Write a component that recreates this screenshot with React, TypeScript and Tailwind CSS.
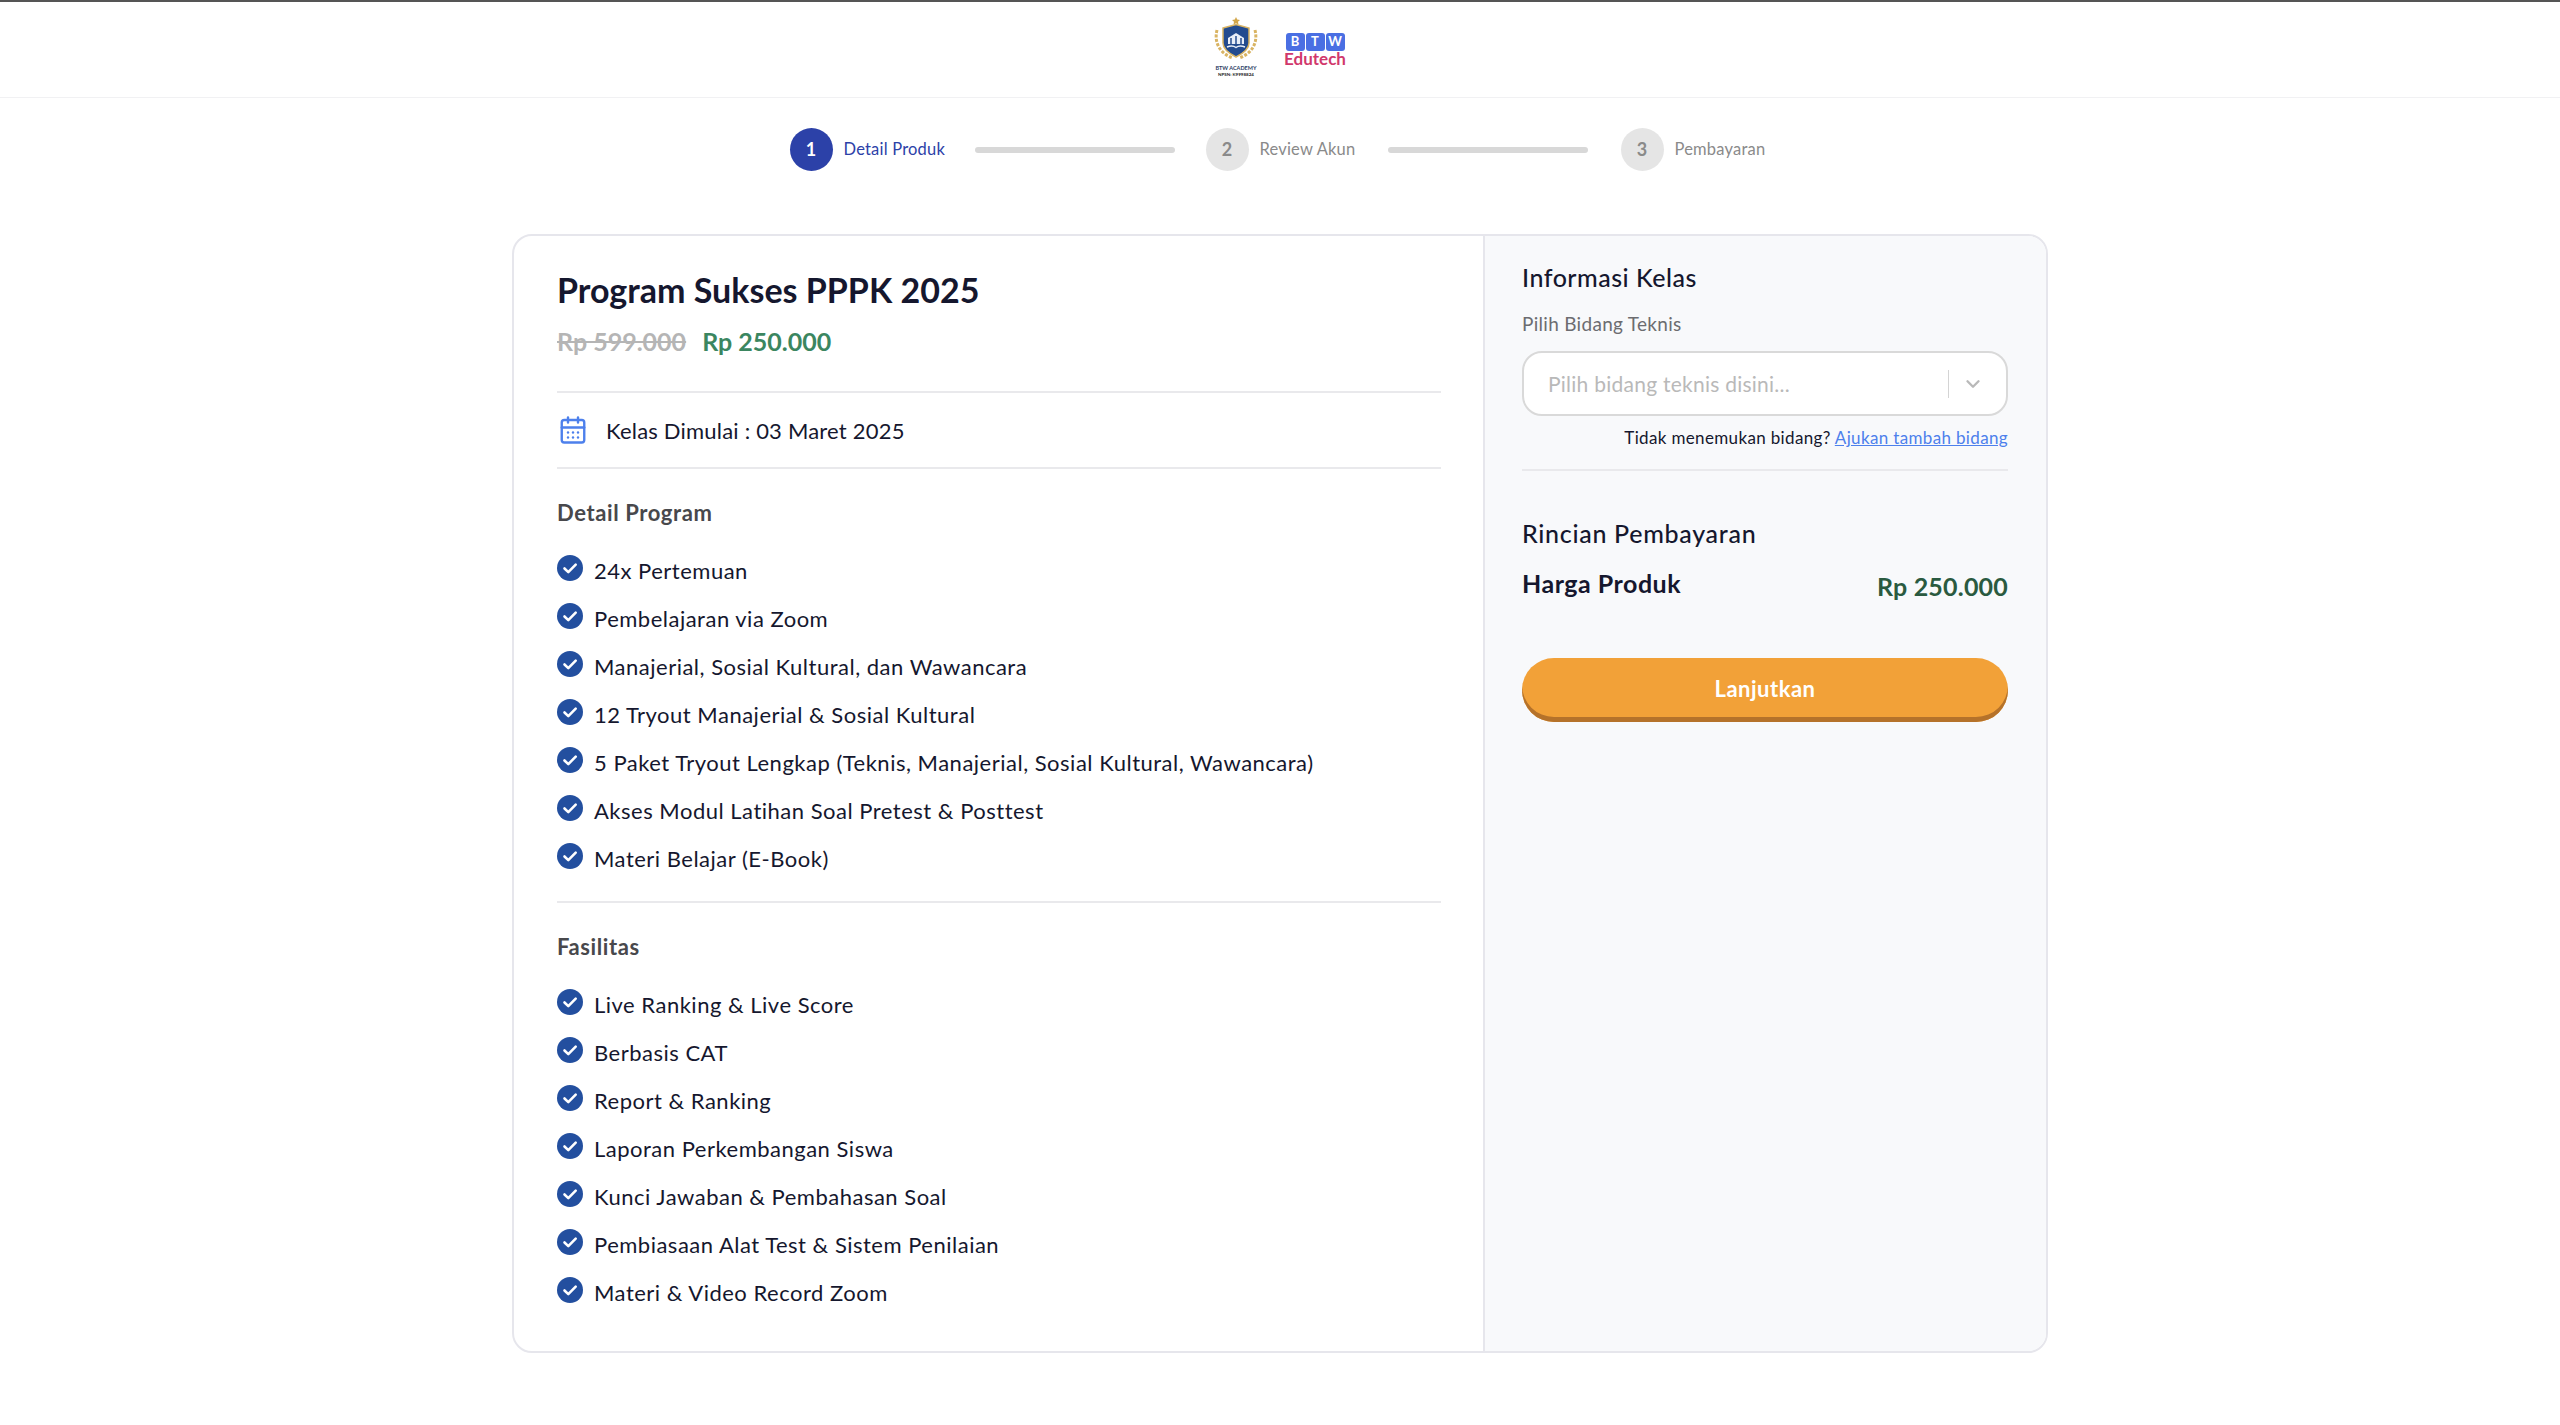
import { CalendarDays, ChevronDown } from "lucide-react";

const detailProgram = [
  "24x Pertemuan",
  "Pembelajaran via Zoom",
  "Manajerial, Sosial Kultural, dan Wawancara",
  "12 Tryout Manajerial & Sosial Kultural",
  "5 Paket Tryout Lengkap (Teknis, Manajerial, Sosial Kultural, Wawancara)",
  "Akses Modul Latihan Soal Pretest & Posttest",
  "Materi Belajar (E-Book)",
];

const fasilitas = [
  "Live Ranking & Live Score",
  "Berbasis CAT",
  "Report & Ranking",
  "Laporan Perkembangan Siswa",
  "Kunci Jawaban & Pembahasan Soal",
  "Pembiasaan Alat Test & Sistem Penilaian",
  "Materi & Video Record Zoom",
];

const CheckBadge = () => (
  <svg viewBox="0 0 26 26" className="h-[26px] w-[26px] shrink-0 -translate-y-[3px]">
    <circle cx="13" cy="13" r="13" fill="#234f9f" />
    <path d="M7.5 13.5l3.8 3.6 7.4-7.4" fill="none" stroke="#fff" strokeWidth="2.6" strokeLinecap="round" strokeLinejoin="round" />
  </svg>
);

const Emblem = () => (
  <svg viewBox="0 0 46 46" className="h-[46px] w-[46px]">
    <path d="M4 13c-3 12 2 23 16 28M42 13c3 12-2 23-16 28" fill="none" stroke="#d9b463" strokeWidth="3" strokeDasharray="3 1.5" />
    <path d="M23 0l1.2 2.6 2.8.3-2 1.9.5 2.8-2.5-1.4-2.5 1.4.5-2.8-2-1.9 2.8-.3z" fill="#d2a64a" />
    <path d="M10 11l13-3.5L36 11v15c0 6-7 11-13 14-6-3-13-8-13-14z" fill="#234b8f" stroke="#d9b463" strokeWidth="1.5" />
    <path d="M15 21l8-5 8 5v6H15z" fill="#e8eef8" />
    <path d="M18 21v6M23 19v8M28 21v6" stroke="#234b8f" strokeWidth="1.5" />
    <path d="M14 30c4-1.5 7-1 9 .5 2-1.5 5-2 9-.5" fill="none" stroke="#e8eef8" strokeWidth="1.5" />
  </svg>
);

const Logo = () => (
  <div className="mr-[6px] flex items-center gap-[24px]">
    <div className="flex w-[52px] -translate-y-[3px] flex-col items-center">
      <Emblem />
      <span className="mt-[2px] text-[5.5px] leading-[7px] font-bold whitespace-nowrap text-[#2b3d63]">BTW ACADEMY</span>
      <span className="text-[4.5px] leading-[5px] font-bold whitespace-nowrap text-[#222]">NPSN: K9998824</span>
    </div>
    <div className="flex w-[58px] flex-col items-center">
      <div className="flex gap-[1px]">
        {["B", "T", "W"].map((l) => (
          <span key={l} className="flex h-[18px] w-[19px] items-center justify-center rounded-[3px] bg-[#4a6fe3] text-[13px] font-bold text-white">
            {l}
          </span>
        ))}
      </div>
      <span className="text-[17px] leading-[16px] font-bold text-[#d1386c]">Edutech</span>
    </div>
  </div>
);

const Step = ({ n, label, active, labelWidth }: { n: number; label: string; active?: boolean; labelWidth: string }) => (
  <div className="flex items-center gap-[11px]">
    <div
      className={
        active
          ? "flex h-[43px] w-[43px] items-center justify-center rounded-full bg-[#2c41a8] text-[18px] font-bold text-white"
          : "flex h-[43px] w-[43px] items-center justify-center rounded-full bg-[#e5e5e5] text-[18px] font-bold text-[#8a8a8a]"
      }
    >
      {n}
    </div>
    <span className={`${labelWidth} text-[16.5px] tracking-[0.2px] whitespace-nowrap ${active ? "text-[#2c41a8]" : "text-[#8a8a8a]"}`}>{label}</span>
  </div>
);

const Bar = ({ last }: { last?: boolean }) => (
  <div className={last ? "mr-[33px] ml-[31px] h-[6px] w-[200px] rounded-full bg-[#d8d8d8]" : "mx-[31px] h-[6px] w-[200px] rounded-full bg-[#d8d8d8]"} />
);

const CheckList = ({ items }: { items: string[] }) => (
  <ul className="flex flex-col gap-[20px]">
    {items.map((t) => (
      <li key={t} className="flex h-[28px] items-center gap-[11px] text-[22px] leading-[28px] tracking-[0.5px] text-[#15172e]">
        <CheckBadge />
        <span>{t}</span>
      </li>
    ))}
  </ul>
);

export default function App() {
  return (
    <div className="min-h-[1425px] bg-white font-['Lato',sans-serif] text-[#15172e]">
      <header className="flex h-[98px] items-center justify-center border-t-2 border-b border-t-[#555] border-b-[#f1f1f3]">
        <Logo />
      </header>

      <div className="mt-[30px] flex h-[43px] items-center justify-center">
        <Step n={1} label="Detail Produk" active labelWidth="w-[100px]" />
        <Bar />
        <Step n={2} label="Review Akun" labelWidth="w-[97px]" />
        <Bar last />
        <Step n={3} label="Pembayaran" labelWidth="w-[96px]" />
      </div>

      <div className="mx-auto mt-[63px] flex h-[1119px] w-[1536px] overflow-hidden rounded-[20px] border-2 border-[#e6e6ec]">
        <section className="w-[971px] shrink-0 border-r-2 border-[#e6e6ec] pt-[32px] pr-[42px] pl-[43px]">
          <h1 className="text-[34px] leading-[44px] font-bold">Program Sukses PPPK 2025</h1>
          <div className="mt-[13px] flex items-center gap-[16px] text-[25px] leading-[32px] font-bold">
            <span className="text-[#b5b5b5] line-through">Rp 599.000</span>
            <span className="text-[#3b8660]">Rp 250.000</span>
          </div>
          <div className="mt-[34px] flex h-[78px] items-center gap-[18px] border-y-2 border-[#e9e9ec] text-[22px] tracking-[0.2px]">
            <CalendarDays className="ml-[1px] h-[30px] w-[30px] text-[#4d80ec]" strokeWidth={1.9} />
            <span>Kelas Dimulai : 03 Maret 2025</span>
          </div>
          <h2 className="mt-[30px] text-[22px] leading-[28px] font-bold tracking-[0.6px] text-[#48484c]">Detail Program</h2>
          <div className="mt-[30px] border-b-2 border-[#e9e9ec] pb-[28px]">
            <CheckList items={detailProgram} />
          </div>
          <h2 className="mt-[30px] text-[22px] leading-[28px] font-bold tracking-[0.6px] text-[#48484c]">Fasilitas</h2>
          <div className="mt-[30px]">
            <CheckList items={fasilitas} />
          </div>
        </section>

        <aside className="flex-1 bg-[#f8f9fb] pt-[25px] pr-[38px] pl-[37px]">
          <h3 className="text-[25px] leading-[32px] font-medium tracking-[0.5px]">Informasi Kelas</h3>
          <p className="mt-[19px] text-[19px] leading-[24px] tracking-[0.3px] text-[#6c6c70]">Pilih Bidang Teknis</p>
          <div className="mt-[15px] flex h-[65px] items-center rounded-[20px] border-2 border-[#d9d9d9] bg-white pl-[24px]">
            <span className="flex-1 text-[21px] tracking-[0.25px] text-[#b9b9b9]">Pilih bidang teknis disini...</span>
            <div className="h-[28px] w-px bg-[#d4d4d4]" />
            <ChevronDown className="mr-[22px] ml-[13px] h-[22px] w-[22px] text-[#b9b9b9]" strokeWidth={2.6} />
          </div>
          <p className="mt-[10px] text-right text-[17px] leading-[24px] tracking-[0.35px]">
            Tidak menemukan bidang? <a className="text-[#4d80ec] underline">Ajukan tambah bidang</a>
          </p>
          <div className="mt-[19px] h-[2px] bg-[#e9e9ec]" />
          <h3 className="mt-[46px] text-[25px] leading-[32px] font-medium tracking-[0.7px]">Rincian Pembayaran</h3>
          <div className="mt-[18px] flex items-start justify-between">
            <span className="text-[25px] leading-[32px] font-bold tracking-[0.5px]">Harga Produk</span>
            <span className="mt-[3px] text-[25px] leading-[32px] font-bold tracking-[0.2px] text-[#2a5a40]">Rp 250.000</span>
          </div>
          <button className="mt-[56px] h-[64px] w-full rounded-full bg-[#f2a138] pb-[4px] text-[22px] font-bold tracking-[0.5px] text-white shadow-[inset_0_-5px_0_#b5722a]">
            Lanjutkan
          </button>
        </aside>
      </div>
    </div>
  );
}
